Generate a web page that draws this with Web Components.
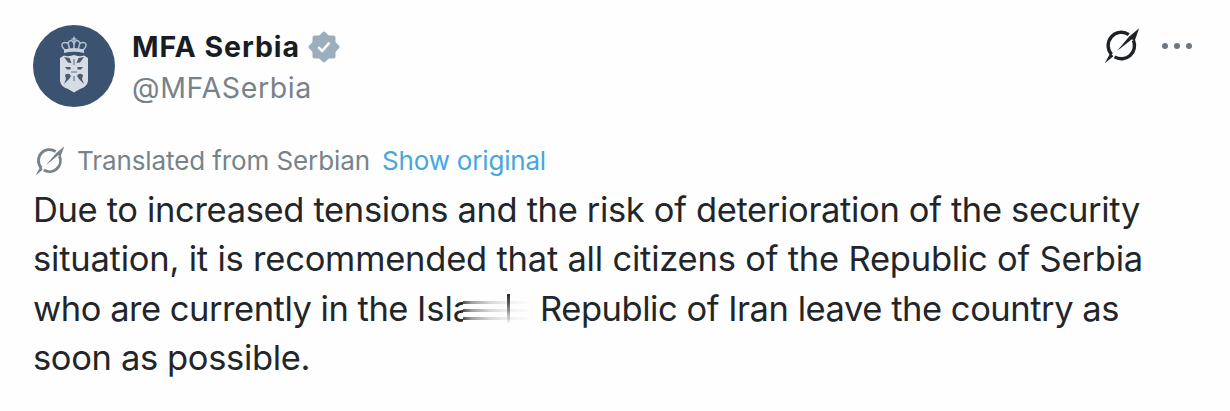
<!DOCTYPE html>
<html lang="en">
<head>
<meta charset="utf-8">
<title>MFA Serbia</title>
<style>
  body {
    margin: 0;
    background: #fefefe;
    font-family: Inter, Roboto, "Liberation Sans", sans-serif;
    color: #22262a;
  }
</style>
</head>
<body>
<post-card></post-card>

<script>
/**
 * A single line of text, tracked so that it fills the measure given in pixels.
 */
class FitText extends HTMLElement {

    constructor() {
        super()
        this.attachShadow({ mode: 'open' })
        this.shadowRoot.innerHTML = `
        <style>
            :host { display: block; white-space: nowrap; }
            span { display: inline-block; }
        </style>
        <span><slot></slot></span>
        `
    }

    connectedCallback() {
        let span = this.shadowRoot.querySelector('span')
        let measure = parseFloat(this.getAttribute('measure'))
        let width = span.getBoundingClientRect().width
        span.style.letterSpacing = (measure - width) / this.textContent.length + 'px'
        this.style.width = measure + 'px'
    }
}

/**
 * Slashed ring icon, coloured by the text colour.
 */
class GrokIcon extends HTMLElement {

    constructor() {
        super()
        this.attachShadow({ mode: 'open' })
        this.shadowRoot.innerHTML = `
        <style>
            :host { display: block; width: 36px; height: 36px; }
            svg { display: block; width: 100%; height: 100%; }
        </style>
        <svg viewBox="0 0 36 36">
            <g fill="none" stroke="currentColor" stroke-width="3.4">
                <path d="M7.6 26.4A13.2 13.2 0 0 1 24.8 6.6"/>
                <path d="M29.4 12.2A13.2 13.2 0 0 1 10.6 28.9"/>
            </g>
            <path fill="currentColor" d="M35.2 .3 30.6 13 27.9 11.2 13 23 25.2 8.6ZM.8 35.3 6.3 25 9.4 28.3Z"/>
        </svg>
        `
    }
}

/**
 * Round avatar with the crowned coat of arms.
 */
class PostAvatar extends HTMLElement {

    constructor() {
        super()
        this.attachShadow({ mode: 'open' })
        this.shadowRoot.innerHTML = `
        <style>
            :host { display: block; width: 82px; height: 82px; }
            svg { display: block; }
        </style>
        <svg width="82" height="82" viewBox="0 0 82 82">
            <circle cx="41" cy="41" r="41" fill="#3b5270"/>
            <g fill="none" stroke="#b4c0ce" stroke-width="1.5">
                <path d="M33 26C26 20 29 16 35 18C37 14 40 15 41 19C42 15 45 14 47 18C53 16 56 20 49 26"/>
                <path d="M41 11.5V25M38.5 14H43.5M35 18 37 25M47 18 45 25"/>
            </g>
            <path d="M31 24.5Q41 21.5 51 24.5V28Q41 25.5 31 28Z" fill="#c9d1db"/>
            <path d="M27 33 31 30.5Q36 32 41 30Q46 32 51 30.5L55 33V56Q54 62 47 64L41 67.5 35 64Q28 62 27 56Z" fill="#d5dce4"/>
            <g fill="#4b5a6d">
                <path d="M31 32 36.5 33 38.5 38 35 37.500ZM51 32 45.500 33 43.500 38 47 37.500Z"/>
                <path d="M32 42H37.500V44.500H34ZM50 42H44.500V44.500H48Z"/>
                <path d="M32 50Q36 47 38 51L36 54 31 59 33 54ZM50 50Q46 47 44 51L46 54 51 59 49 54Z"/>
            </g>
            <path d="M41 34V40M38 47H44M41 51V56" fill="none" stroke="#8594a6" stroke-width="1.6"/>
        </svg>
        `
    }
}

/**
 * Grey scalloped verification badge.
 */
class VerifiedBadge extends HTMLElement {

    constructor() {
        super()
        this.attachShadow({ mode: 'open' })
        this.shadowRoot.innerHTML = `
        <style>
            :host { display: block; width: 32px; height: 34px; }
            svg { display: block; }
        </style>
        <svg width="32" height="34" viewBox="0 0 32 34">
            <g fill="#9baebd" stroke="#9baebd" stroke-width="4" stroke-linejoin="round">
                <rect x="6.500" y="7.500" width="19" height="19"/>
                <rect x="6.500" y="7.500" width="19" height="19" transform="rotate(45 16 17)"/>
            </g>
            <path d="M10.200 17.200 14.200 21 21.400 12.600" fill="none" stroke="#fff" stroke-width="2.500"/>
        </svg>
        `
    }
}

/**
 * Word that trails off into streaks after its first letters.
 */
class SmearedWord extends HTMLElement {

    constructor() {
        super()
        this.attachShadow({ mode: 'open' })
        this.shadowRoot.innerHTML = `
        <style>
            :host { display: flex; width: 123px; height: 49px; }
            .word { width: 46px; overflow: hidden; white-space: nowrap; }
            svg { display: block; flex: none; }
        </style>
        <div class="word"><slot></slot></div>
        <svg width="77" height="49" viewBox="0 0 77 49">
            <defs>
                <linearGradient id="streak">
                    <stop offset="0" stop-color="#22262a" stop-opacity=".8"/>
                    <stop offset=".12" stop-color="#22262a" stop-opacity=".45"/>
                    <stop offset=".4" stop-color="#22262a" stop-opacity=".17"/>
                    <stop offset=".65" stop-color="#22262a" stop-opacity=".07"/>
                    <stop offset="1" stop-color="#22262a" stop-opacity="0"/>
                </linearGradient>
                <linearGradient id="stem" x2="0" y2="1">
                    <stop offset="0" stop-color="#22262a"/>
                    <stop offset=".35" stop-color="#22262a" stop-opacity=".7"/>
                    <stop offset="1" stop-color="#22262a" stop-opacity="0"/>
                </linearGradient>
            </defs>
            <g fill="url(#streak)">
                <rect y="17" width="68" height="3"/>
                <rect y="25" width="68" height="3"/>
                <rect y="33" width="68" height="3"/>
            </g>
            <rect x="44" y="10" width="3" height="30" fill="url(#stem)"/>
        </svg>
        `
    }
}

/**
 * The post: author header, translation notice and text.
 */
class PostCard extends HTMLElement {

    constructor() {
        super()
        this.attachShadow({ mode: 'open' })
        this.shadowRoot.innerHTML = `
        <style>
            :host {
                display: block;
                box-sizing: border-box;
                height: 411px;
                padding: 25px 38px 0 33px;
                overflow: hidden;
            }
            header { display: flex; height: 82px; }
            .author { margin-left: 17px; flex-grow: 1; }
            .name { display: flex; align-items: center; gap: 8px; height: 43px; }
            .name fit-text { font-size: 28.5px; font-weight: 700; line-height: 43px; color: #191d21; }
            .handle { font-size: 28.5px; line-height: 40px; color: #77828b; }
            .actions { display: flex; align-items: center; gap: 22px; height: 42px; color: #1e2225; }
            .dots { display: flex; gap: 6px; color: #6d767e; }
            .dots i { width: 6px; height: 6px; border-radius: 50%; background: currentColor; }
            .notice {
                display: flex;
                align-items: center;
                height: 36px;
                margin-top: 36px;
                font-size: 26px;
                line-height: 36px;
                color: #77828b;
            }
            .notice grok-icon { width: 30px; height: 30px; margin: 0 12px 0 2px; }
            .link { margin-left: 12px; color: #45a7dc; }
            .text { margin-top: 6px; font-size: 34.5px; line-height: 49.3px; }
            .row { display: flex; height: 49.3px; }
        </style>
        <header>
            <post-avatar></post-avatar>
            <div class="author">
                <div class="name">
                    <fit-text measure="168">MFA Serbia</fit-text>
                    <verified-badge></verified-badge>
                </div>
                <fit-text class="handle" measure="180">@MFASerbia</fit-text>
            </div>
            <div class="actions">
                <grok-icon></grok-icon>
                <div class="dots"><i></i><i></i><i></i></div>
            </div>
        </header>
        <div class="notice">
            <grok-icon></grok-icon>
            <fit-text measure="293">Translated from Serbian</fit-text>
            <fit-text class="link" measure="164">Show original</fit-text>
        </div>
        <div class="text">
            <fit-text measure="1107">Due to increased tensions and the risk of deterioration of the security</fit-text>
            <fit-text measure="1110">situation, it is recommended that all citizens of the Republic of Serbia</fit-text>
            <div class="row">
                <fit-text measure="375">who are currently in the</fit-text>
                <smeared-word style="margin-left: 9px">Isla</smeared-word>
                <fit-text measure="579">Republic of Iran leave the country as</fit-text>
            </div>
            <fit-text measure="277">soon as possible.</fit-text>
        </div>
        `
    }
}

customElements.define('fit-text', FitText)
customElements.define('grok-icon', GrokIcon)
customElements.define('post-avatar', PostAvatar)
customElements.define('verified-badge', VerifiedBadge)
customElements.define('smeared-word', SmearedWord)
customElements.define('post-card', PostCard)
</script>
</body>
</html>
